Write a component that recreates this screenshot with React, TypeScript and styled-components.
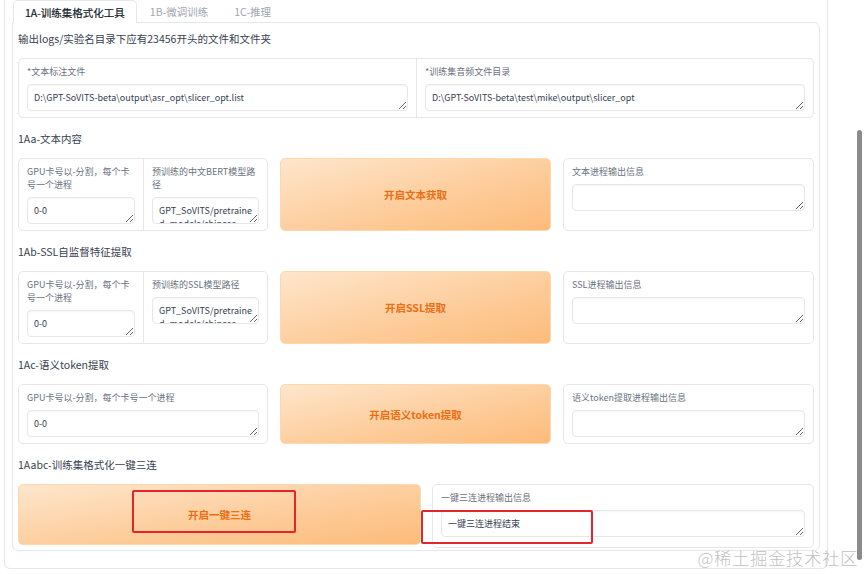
import React from "react";
import styled, { createGlobalStyle } from "styled-components";

const GlobalStyle = createGlobalStyle`
  html, body {
    margin: 0;
    padding: 0;
    background: #fff;
  }
  body {
    font-family: "Noto Sans CJK SC", "Noto Sans", sans-serif;
    color: #374151;
  }
  * {
    box-sizing: border-box;
  }
`;

const Page = styled.div`
  position: relative;
  width: 865px;
  height: 574px;
  overflow: hidden;
  display: flex;
  background: #fff;
`;

const Frame = styled.div`
  margin-left: 4px;
  width: 824px;
  height: 569px;
  border: 1px solid #e5e7eb;
  border-top: none;
  border-radius: 0 0 6px 6px;
  padding: 0 7px 17px 7px;
  display: flex;
  flex-direction: column;
`;

const TabNav = styled.div`
  display: flex;
  align-items: flex-end;
  height: 22px;
  padding-left: 1px;
`;

const Tab = styled.div<{ $active?: boolean }>`
  position: relative;
  z-index: 1;
  display: flex;
  align-items: center;
  height: ${(p) => (p.$active ? "23px" : "22px")};
  margin-bottom: ${(p) => (p.$active ? "-1px" : "0")};
  padding: 0 ${(p) => (p.$active ? "11px" : "12px")};
  font-size: 10.5px;
  color: ${(p) => (p.$active ? "#111827" : "#a1a7b0")};
  -webkit-text-stroke: ${(p) => (p.$active ? "0.2px #111827" : "0")};
  background: ${(p) => (p.$active ? "#fff" : "transparent")};
  border: 1px solid ${(p) => (p.$active ? "#e5e7eb" : "transparent")};
  border-bottom: none;
  border-radius: 5px 5px 0 0;
  white-space: nowrap;
`;

const Panel = styled.div`
  height: 529px;
  border: 1px solid #e5e7eb;
  border-radius: 0 6px 6px 6px;
  padding: 8px 5px 2px 5px;
  display: flex;
  flex-direction: column;
  gap: 13px;
`;

const Section = styled.section`
  display: flex;
  flex-direction: column;
  gap: 11px;
`;

const Heading = styled.div`
  height: 16px;
  line-height: 16px;
  font-size: 10.5px;
  color: #374151;
  white-space: nowrap;
`;

const Row = styled.div<{ $cols: string; $h: number }>`
  display: grid;
  grid-template-columns: ${(p) => p.$cols};
  gap: 12px;
  height: ${(p) => p.$h}px;
`;

const Block = styled.div<{ $cols: number }>`
  display: grid;
  grid-template-columns: repeat(${(p) => p.$cols}, 1fr);
  border: 1px solid #e5e7eb;
  border-radius: 5px;
  background: #fff;
  overflow: hidden;
`;

const Field = styled.div`
  display: flex;
  flex-direction: column;
  gap: 6px;
  padding: 6px 8px;
  min-width: 0;

  & + & {
    border-left: 1px solid #e5e7eb;
  }
`;

const Label = styled.div`
  font-size: 9px;
  line-height: 13px;
  color: #6b7280;
`;

const Area = styled.textarea`
  display: block;
  width: 100%;
  height: 27px;
  min-height: 27px;
  flex: none;
  margin: 0;
  padding: 6px 2px 6px 6px;
  border: 1px solid #e5e7eb;
  border-radius: 4px;
  background: #fff;
  box-shadow: inset 0 1px 2px rgba(0, 0, 0, 0.04);
  font-family: "Noto Sans CJK SC", "Noto Sans", sans-serif;
  font-size: 9px;
  line-height: 13px;
  color: #374151;
  resize: vertical;
  overflow: hidden;
  outline: none;
`;

const Primary = styled.button<{ $h?: number }>`
  display: flex;
  align-items: center;
  justify-content: center;
  height: ${(p) => (p.$h ? `${p.$h}px` : "auto")};
  align-self: ${(p) => (p.$h ? "start" : "stretch")};
  border: 1px solid #fed7aa;
  border-radius: 5px;
  background: linear-gradient(to bottom right, #fee6cc, #fdcb98 60%, #fdbb7a);
  color: #ec6f14;
  font-family: "Noto Sans CJK SC", "Noto Sans", sans-serif;
  font-size: 10.5px;
  font-weight: 700;
  cursor: pointer;
`;

const ScrollTrack = styled.div`
  margin-left: auto;
  width: 10px;
  padding: 130px 3px 14px 2px;
  display: flex;
`;

const Thumb = styled.div`
  flex: 1;
  background: #8b8b8b;
  border-radius: 3px;
`;

const Mark = styled.div<{ $x: number; $y: number; $w: number; $h: number }>`
  position: absolute;
  left: ${(p) => p.$x}px;
  top: ${(p) => p.$y}px;
  width: ${(p) => p.$w}px;
  height: ${(p) => p.$h}px;
  border: 2px solid #e3262b;
  border-radius: 2px;
  pointer-events: none;
`;

const Watermark = styled.div`
  position: absolute;
  right: 7px;
  bottom: 4px;
  font-family: "Noto Sans CJK SC", sans-serif;
  font-size: 17.5px;
  font-weight: 300;
  letter-spacing: 0.5px;
  color: rgba(150, 150, 150, 0.6);
  white-space: nowrap;
  pointer-events: none;
`;

const TextField = ({ label, value }: { label: string; value?: string }) => (
  <Field>
    <Label>{label}</Label>
    <Area readOnly value={value ?? ""} />
  </Field>
);

const THREE = "250px 1fr 251px";

export default function App() {
  return (
    <Page>
      <GlobalStyle />
      <Frame>
        <TabNav>
          <Tab $active>1A-训练集格式化工具</Tab>
          <Tab>1B-微调训练</Tab>
          <Tab>1C-推理</Tab>
        </TabNav>
        <Panel>
          <Section>
            <Heading>输出logs/实验名目录下应有23456开头的文件和文件夹</Heading>
            <Block $cols={2} style={{ height: 60 }}>
              <TextField label="*文本标注文件" value="D:\GPT-SoVITS-beta\output\asr_opt\slicer_opt.list" />
              <TextField label="*训练集音频文件目录" value="D:\GPT-SoVITS-beta\test\mike\output\slicer_opt" />
            </Block>
          </Section>

          <Section>
            <Heading>1Aa-文本内容</Heading>
            <Row $cols={THREE} $h={73}>
              <Block $cols={2}>
                <TextField label="GPU卡号以-分割，每个卡号一个进程" value="0-0" />
                <TextField
                  label="预训练的中文BERT模型路径"
                  value="GPT_SoVITS/pretrained_models/chinese-roberta-wwm-ext-large"
                />
              </Block>
              <Primary>开启文本获取</Primary>
              <Block $cols={1}>
                <TextField label="文本进程输出信息" />
              </Block>
            </Row>
          </Section>

          <Section>
            <Heading>1Ab-SSL自监督特征提取</Heading>
            <Row $cols={THREE} $h={73}>
              <Block $cols={2}>
                <TextField label="GPU卡号以-分割，每个卡号一个进程" value="0-0" />
                <TextField
                  label="预训练的SSL模型路径"
                  value="GPT_SoVITS/pretrained_models/chinese-hubert-base"
                />
              </Block>
              <Primary>开启SSL提取</Primary>
              <Block $cols={1}>
                <TextField label="SSL进程输出信息" />
              </Block>
            </Row>
          </Section>

          <Section>
            <Heading>1Ac-语义token提取</Heading>
            <Row $cols={THREE} $h={60}>
              <Block $cols={1}>
                <TextField label="GPU卡号以-分割，每个卡号一个进程" value="0-0" />
              </Block>
              <Primary>开启语义token提取</Primary>
              <Block $cols={1}>
                <TextField label="语义token提取进程输出信息" />
              </Block>
            </Row>
          </Section>

          <Section>
            <Heading>1Aabc-训练集格式化一键三连</Heading>
            <Row $cols="403px 1fr" $h={64} style={{ columnGap: 11 }}>
              <Primary $h={61}>开启一键三连</Primary>
              <Block $cols={1}>
                <TextField label="一键三连进程输出信息" value="一键三连进程结束" />
              </Block>
            </Row>
          </Section>
        </Panel>
      </Frame>
      <ScrollTrack>
        <Thumb />
      </ScrollTrack>
      <Mark $x={132} $y={490} $w={164} $h={43} />
      <Mark $x={421} $y={510} $w={172} $h={34} />
      <Watermark>@稀土掘金技术社区</Watermark>
    </Page>
  );
}
